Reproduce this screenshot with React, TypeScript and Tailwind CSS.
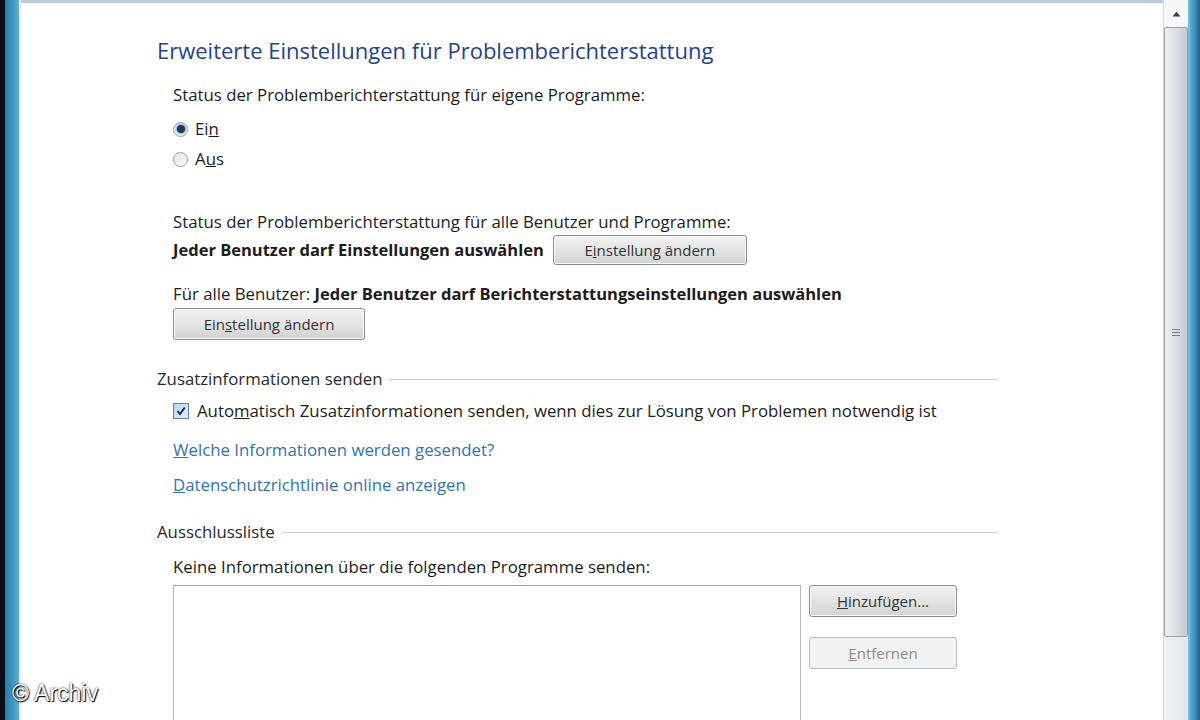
import React from "react";

const FONT = "font-['Open_Sans','Noto_Sans',sans-serif]";

function Radio({ checked }: { checked?: boolean }) {
  return (
    <span className="flex h-[15px] w-[15px] items-center justify-center rounded-full border border-[#9aa0a6] bg-gradient-to-br from-[#e4e6e8] to-[#fafafa]">
      {checked && (
        <span className="h-[8px] w-[8px] rounded-full bg-[#1d3a5c] shadow-[0_0_2px_1px_#7fa6cc]" />
      )}
    </span>
  );
}

function Checkbox() {
  return (
    <span className="flex h-[16px] w-[16px] items-center justify-center border border-[#5a7ea6] bg-gradient-to-br from-[#b9d4ec] to-[#e6f0fa]">
      <svg width="12" height="12" viewBox="0 0 12 12">
        <path d="M2.5 6.2 L5 9 L9.8 2.5" fill="none" stroke="#14305a" strokeWidth="2" />
      </svg>
    </span>
  );
}

function Button({
  children,
  w,
  h = "h-[32px]",
  disabled,
}: {
  children: React.ReactNode;
  w: string;
  h?: string;
  disabled?: boolean;
}) {
  return (
    <div
      className={`${w} ${h} flex items-center justify-center rounded-[3px] border text-[15px] ${
        disabled
          ? "border-[#b8bcc0] bg-[#f2f2f2] text-[#8a8a8a]"
          : "border-[#8a8d90] bg-gradient-to-b from-[#f3f3f3] via-[#e4e4e4] to-[#d2d2d2] text-[#333] shadow-[inset_0_0_0_1px_#fbfbfb]"
      }`}
    >
      {children}
    </div>
  );
}

function SectionHeader({ title, mt }: { title: string; mt: string }) {
  return (
    <div className={`${mt} flex h-[24px] items-center gap-[7px] pr-[165px]`}>
      <span className="text-[16.8px] text-[#2a2a2a]">{title}</span>
      <span className="h-px flex-1 bg-[#cfd6da]" />
    </div>
  );
}

export default function App() {
  return (
    <div className={`relative flex h-[720px] w-[1200px] overflow-hidden bg-white ${FONT}`}>
      {/* left window border */}
      <div className="w-[5px] bg-[#0b0f14]" />
      <div className="w-[14px] bg-gradient-to-r from-[#2c7ca4] via-[#3f94bd] to-[#5fb0d2]" />
      <div className="w-[2px] bg-[#dbeef7]" />

      {/* content */}
      <div className="flex flex-1 flex-col border-t-[3px] border-[#b9cbd6]">
        <div className="flex flex-1 flex-col pl-[136px] text-[#1c1c1c]">
          <div className="mt-[32px] h-[30px] text-[22px] leading-[30px] text-[#26438a]">
            Erweiterte Einstellungen für Problemberichterstattung
          </div>

          <div className="pl-[16px] text-[16.8px]">
            <div className="mt-[18px] h-[24px] leading-[24px]">
              Status der Problemberichterstattung für eigene Programme:
            </div>
            <div className="mt-[10px] flex h-[24px] items-center gap-[7px]">
              <Radio checked />
              <span>
                Ei<u>n</u>
              </span>
            </div>
            <div className="mt-[6px] flex h-[24px] items-center gap-[7px]">
              <Radio />
              <span>
                A<u>u</u>s
              </span>
            </div>

            <div className="mt-[39px] h-[24px] leading-[24px]">
              Status der Problemberichterstattung für alle Benutzer und Programme:
            </div>
            <div className="mt-[1px] flex h-[30px] items-center gap-[9px]">
              <span className="text-[16.5px] font-bold">Jeder Benutzer darf Einstellungen auswählen</span>
              <Button w="w-[194px]" h="h-[30px]">
                <span>
                  E<u>i</u>nstellung ändern
                </span>
              </Button>
            </div>

            <div className="mt-[17px] h-[24px] leading-[24px]">
              Für alle Benutzer: <span className="text-[16.5px] font-bold">Jeder Benutzer darf Berichterstattungseinstellungen auswählen</span>
            </div>
            <div className="mt-[2px]">
              <Button w="w-[192px]">
                <span>
                  Ein<u>s</u>tellung ändern
                </span>
              </Button>
            </div>
          </div>

          <SectionHeader title="Zusatzinformationen senden" mt="mt-[27px]" />

          <div className="pl-[16px] text-[16.8px]">
            <div className="mt-[8px] flex h-[24px] items-center gap-[8px]">
              <Checkbox />
              <span>
                Auto<u>m</u>atisch Zusatzinformationen senden, wenn dies zur Lösung von Problemen notwendig ist
              </span>
            </div>
            <div className="mt-[15px] h-[24px] leading-[24px] text-[#2f74ad]">
              <u>W</u>elche Informationen werden gesendet?
            </div>
            <div className="mt-[11px] h-[24px] leading-[24px] text-[#2f74ad]">
              <u>D</u>atenschutzrichtlinie online anzeigen
            </div>
          </div>

          <SectionHeader title="Ausschlussliste" mt="mt-[23px]" />

          <div className="pl-[16px] text-[16.8px]">
            <div className="mt-[11px] h-[24px] leading-[24px]">
              Keine Informationen über die folgenden Programme senden:
            </div>
            <div className="mt-[6px] flex gap-[8px]">
              <div className="h-[200px] w-[628px] border border-[#b4b8bc] border-t-[#9ea3a8] bg-white" />
              <div className="flex flex-col gap-[20px]">
                <Button w="w-[148px]">
                  <span>
                    <u>H</u>inzufügen...
                  </span>
                </Button>
                <Button w="w-[148px]" disabled>
                  <span>
                    <u>E</u>ntfernen
                  </span>
                </Button>
              </div>
            </div>
          </div>
        </div>
      </div>

      {/* scrollbar */}
      <div className="flex w-[25px] flex-col border-l border-[#d6d8dc] bg-[#eeeff1]">
        <div className="flex h-[27px] items-center justify-center bg-[#f7f7f8]">
          <svg width="9" height="6" viewBox="0 0 9 6">
            <path d="M0.5 5.5 L4.5 0.8 L8.5 5.5 Z" fill="#3b3b3b" />
          </svg>
        </div>
        <div className="flex h-[610px] items-center justify-center rounded-[2px] border border-[#9c9ea4] bg-gradient-to-r from-[#eef0f3] via-[#dcdee4] to-[#c7cad2]">
          <div className="flex flex-col gap-[2px]">
            <span className="h-px w-[8px] bg-[#7c7f86]" />
            <span className="h-px w-[8px] bg-[#7c7f86]" />
            <span className="h-px w-[8px] bg-[#7c7f86]" />
          </div>
        </div>
        <div className="flex-1 bg-gradient-to-r from-[#f2f2f3] to-[#e4e5e8]" />
      </div>

      {/* right window border */}
      <div className="w-[2px] bg-[#7fb8d4]" />
      <div className="w-[10px] bg-gradient-to-r from-[#5aaed2] via-[#3b8fb8] to-[#1d5f82]" />

      {/* watermark */}
      <div className="absolute bottom-[10px] left-[12px] font-['Liberation_Sans',sans-serif] text-[23px] text-white [text-shadow:0_0_2px_#000,1px_1px_1px_#000]">
        © Archiv
      </div>
    </div>
  );
}
